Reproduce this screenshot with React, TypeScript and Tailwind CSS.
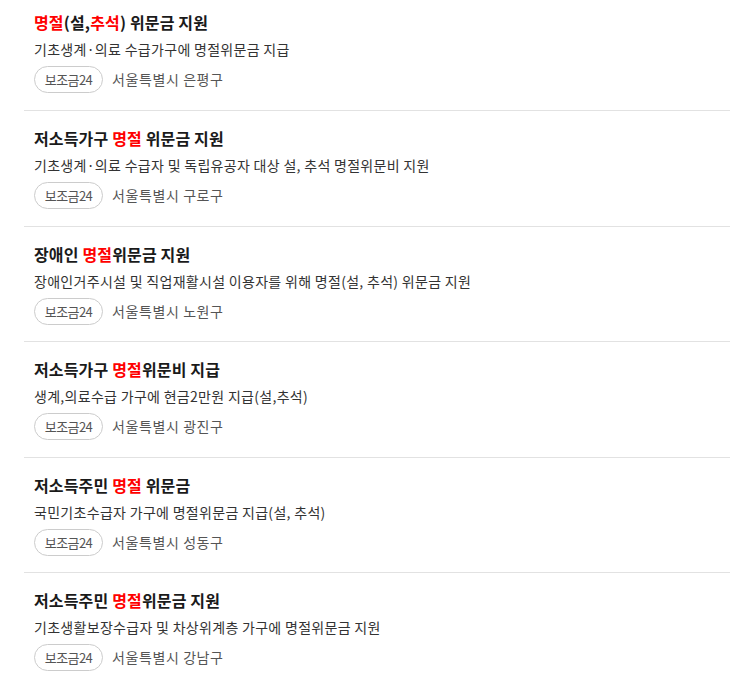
import React from "react";

type Part = { t: string; r?: boolean };
type Item = { title: Part[]; desc: string; region: string };

const items: Item[] = [
  {
    title: [{ t: "명절", r: true }, { t: "(설," }, { t: "추석", r: true }, { t: ") 위문금 지원" }],
    desc: "기초생계·의료 수급가구에 명절위문금 지급",
    region: "서울특별시 은평구",
  },
  {
    title: [{ t: "저소득가구 " }, { t: "명절", r: true }, { t: " 위문금 지원" }],
    desc: "기초생계·의료 수급자 및 독립유공자 대상 설, 추석 명절위문비 지원",
    region: "서울특별시 구로구",
  },
  {
    title: [{ t: "장애인 " }, { t: "명절", r: true }, { t: "위문금 지원" }],
    desc: "장애인거주시설 및 직업재활시설 이용자를 위해 명절(설, 추석) 위문금 지원",
    region: "서울특별시 노원구",
  },
  {
    title: [{ t: "저소득가구 " }, { t: "명절", r: true }, { t: "위문비 지급" }],
    desc: "생계,의료수급 가구에 현금2만원 지급(설,추석)",
    region: "서울특별시 광진구",
  },
  {
    title: [{ t: "저소득주민 " }, { t: "명절", r: true }, { t: " 위문금" }],
    desc: "국민기초수급자 가구에 명절위문금 지급(설, 추석)",
    region: "서울특별시 성동구",
  },
  {
    title: [{ t: "저소득주민 " }, { t: "명절", r: true }, { t: "위문금 지원" }],
    desc: "기초생활보장수급자 및 차상위계층 가구에 명절위문금 지원",
    region: "서울특별시 강남구",
  },
];

export default function App() {
  return (
    <div
      className="w-[730px] h-[674px] overflow-hidden bg-white pl-[24px]"
      style={{ fontFamily: '"Noto Sans CJK KR", "Noto Sans", sans-serif' }}
    >
      {items.map((it, i) => (
        <div
          key={i}
          className={`px-[10px] ${i === 2 || i === 4 ? "pb-[16px]" : "pb-[17px]"} ${
            i === 0 ? "pt-[10px]" : "pt-[15px] border-t border-[#e2e2e2]"
          }`}
        >
          <div className="text-[16px] leading-[24px] font-bold text-[#1a1a1a] tracking-[0.15px]">
            {it.title.map((p, j) => (
              <span key={j} className={p.r ? "text-[#ff0000]" : ""}>
                {p.t}
              </span>
            ))}
          </div>
          <div className="mt-[5px] text-[14px] leading-[20px] text-[#333333] tracking-[0.3px]">
            {it.desc}
          </div>
          <div className="mt-[7px] flex items-center gap-[9px]">
            <span className="h-[27px] w-[69px] flex items-center justify-center rounded-full border border-[#cccccc] text-[13px] text-[#555555] tracking-[-0.6px]">
              보조금24
            </span>
            <span className="text-[14px] text-[#555555] tracking-[0.6px]">{it.region}</span>
          </div>
        </div>
      ))}
    </div>
  );
}
